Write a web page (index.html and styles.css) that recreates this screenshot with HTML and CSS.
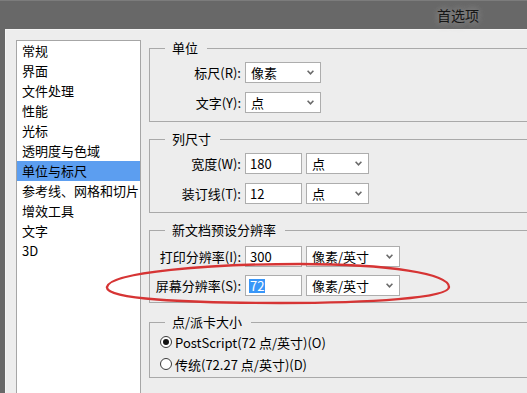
FILE: index.html
```html
<!DOCTYPE html>
<html lang="zh">
<head>
<meta charset="utf-8">
<title>首选项</title>
<link rel="stylesheet" href="styles.css">
</head>
<body>
<div class="titlebar"><span class="title">首选项</span></div>
<div class="dialog">
  <ul class="nav">
    <li>常规</li>
    <li>界面</li>
    <li>文件处理</li>
    <li>性能</li>
    <li>光标</li>
    <li>透明度与色域</li>
    <li class="active">单位与标尺</li>
    <li>参考线、网格和切片</li>
    <li>增效工具</li>
    <li>文字</li>
    <li>3D</li>
  </ul>
  <div class="panels">
    <fieldset class="group g1">
      <legend>单位</legend>
      <div class="row">
        <span class="lbl">标尺(R):</span>
        <div class="select w76"><span>像素</span><svg class="chev" width="7" height="5" viewBox="0 0 7 5"><path d="M0.6 0.8 L3.5 3.8 L6.4 0.8" fill="none" stroke="#6a6a6a" stroke-width="1.6"/></svg></div>
      </div>
      <div class="row">
        <span class="lbl">文字(Y):</span>
        <div class="select w76"><span>点</span><svg class="chev" width="7" height="5" viewBox="0 0 7 5"><path d="M0.6 0.8 L3.5 3.8 L6.4 0.8" fill="none" stroke="#6a6a6a" stroke-width="1.6"/></svg></div>
      </div>
    </fieldset>
    <fieldset class="group g2">
      <legend>列尺寸</legend>
      <div class="row">
        <span class="lbl">宽度(W):</span>
        <div class="input">180</div>
        <div class="select w63"><span>点</span><svg class="chev" width="7" height="5" viewBox="0 0 7 5"><path d="M0.6 0.8 L3.5 3.8 L6.4 0.8" fill="none" stroke="#6a6a6a" stroke-width="1.6"/></svg></div>
      </div>
      <div class="row">
        <span class="lbl">装订线(T):</span>
        <div class="input">12</div>
        <div class="select w63"><span>点</span><svg class="chev" width="7" height="5" viewBox="0 0 7 5"><path d="M0.6 0.8 L3.5 3.8 L6.4 0.8" fill="none" stroke="#6a6a6a" stroke-width="1.6"/></svg></div>
      </div>
    </fieldset>
    <fieldset class="group g3">
      <legend>新文档预设分辨率</legend>
      <div class="row">
        <span class="lbl">打印分辨率(I):</span>
        <div class="input">300</div>
        <div class="select w94"><span>像素/英寸</span><svg class="chev" width="7" height="5" viewBox="0 0 7 5"><path d="M0.6 0.8 L3.5 3.8 L6.4 0.8" fill="none" stroke="#6a6a6a" stroke-width="1.6"/></svg></div>
      </div>
      <div class="row">
        <span class="lbl">屏幕分辨率(S):</span>
        <div class="input"><span class="hl">72</span></div>
        <div class="select w94"><span>像素/英寸</span><svg class="chev" width="7" height="5" viewBox="0 0 7 5"><path d="M0.6 0.8 L3.5 3.8 L6.4 0.8" fill="none" stroke="#6a6a6a" stroke-width="1.6"/></svg></div>
      </div>
    </fieldset>
    <fieldset class="group g4">
      <legend>点/派卡大小</legend>
      <div class="radio-row"><span class="radio on"></span><span>PostScript(72 点/英寸)(O)</span></div>
      <div class="radio-row"><span class="radio"></span><span>传统(72.27 点/英寸)(D)</span></div>
    </fieldset>
  </div>
</div>
<svg class="mark" width="527" height="393" viewBox="0 0 527 393">
  <path d="M107,287 C110,272 210,264 300,264 C390,264 449,274 449,287 C449,298 370,303 280,303 C185,303 105,299 107,287 Z" fill="none" stroke="#d63434" stroke-width="2.4"/>
</svg>
</body>
</html>
```

FILE: styles.css
```css
* { box-sizing: border-box; }
html, body {
  margin: 0;
  padding: 0;
  width: 527px;
  height: 393px;
  overflow: hidden;
}
body {
  position: relative;
  background: #686868;
  font-family: "Noto Sans CJK SC", "Noto Sans", sans-serif;
  font-size: 13px;
  color: #000;
}
.titlebar {
  height: 29px;
  display: flex;
  align-items: center;
  justify-content: flex-end;
  padding-right: 48px;
  background: #686868;
  border-top: 1px solid #7c7c7c;
}
.title {
  font-size: 14px;
  line-height: 16px;
  color: #161616;
  text-shadow: 0 0 6px #8e8e8e, 0 0 10px #8a8a8a;
}
.dialog {
  margin-left: 5px;
  height: 364px;
  background: #ededed;
  display: flex;
  align-items: flex-start;
  padding: 11px 0 0 11px;
  overflow: hidden;
  box-shadow: inset 1px 1px 0 #f5f5f5;
}
.nav {
  list-style: none;
  margin: 0;
  padding: 0;
  width: 125px;
  height: 400px;
  flex: none;
  background: #fff;
  border: 1px solid #a6a6a6;
}
.nav li {
  height: 20px;
  line-height: 20px;
  padding-left: 5px;
  white-space: nowrap;
}
.nav li.active { background: #5c9ef0; }
.panels {
  margin-left: 8px;
  width: 420px;
  flex: none;
  display: flex;
  flex-direction: column;
}
.group {
  margin: 0;
  padding: 0;
  min-width: 0;
  border: 1px solid #a9a9a9;
  border-right: none;
}
.group legend {
  margin-left: 15px;
  padding: 0 9px 0 7px;
  line-height: 16px;
  font-size: 13px;
}
.g1 { padding: 6px 0 8px; }
.g2 { margin-top: 9px; padding: 6px 0 8px; }
.g3 { margin-top: 9px; padding: 8px 0 6px; }
.g4 { margin-top: 11px; padding: 1px 0 2px; }
.row {
  display: flex;
  align-items: center;
  height: 21px;
}
.row + .row { margin-top: 9px; }
.g3 .row + .row { margin-top: 8px; }
.lbl {
  width: 91px;
  text-align: right;
  margin-right: 4px;
  white-space: nowrap;
  line-height: 21px;
}
.select, .input {
  height: 21px;
  background: #fff;
  border: 1px solid #adadad;
  display: flex;
  align-items: center;
  line-height: 19px;
}
.select { padding: 0 6px 0 5px; }
.select .chev { margin-left: auto; }
.input {
  width: 57px;
  margin-right: 4px;
  padding-left: 4px;
}
.w76 { width: 76px; }
.w63 { width: 63px; }
.w94 { width: 94px; }
.hl {
  background: #3896f8;
  color: #fff;
  line-height: 14px;
  padding: 0 1px;
  margin-left: -1px;
}
.radio-row {
  display: flex;
  align-items: center;
  height: 22px;
  padding-left: 10px;
  white-space: nowrap;
}
.radio {
  width: 12px;
  height: 12px;
  border: 1px solid #3a3a3a;
  border-radius: 50%;
  background: #fff;
  margin-right: 3px;
  display: flex;
  align-items: center;
  justify-content: center;
  flex: none;
}
.radio.on::after {
  content: "";
  width: 6px;
  height: 6px;
  border-radius: 50%;
  background: #111;
}
.mark {
  position: absolute;
  left: 0;
  top: 0;
  pointer-events: none;
}
```
